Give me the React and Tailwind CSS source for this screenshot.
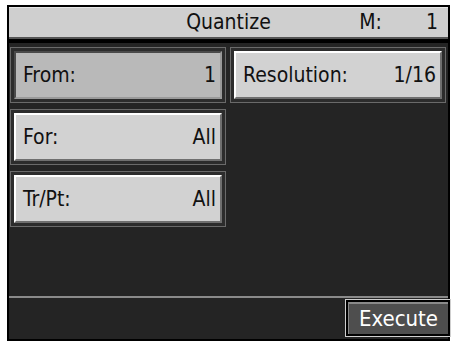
import React from 'react';

const font = { fontFamily: '"DejaVu Sans", "Liberation Sans", sans-serif' };

// One parameter field on the LCD
const Field = ({ label, value, active }) => (
  <div className="h-[56px] border border-[#6a6a6a] bg-[#2c2c2c] p-[3px]">
    <div
      className={
        active
          ? 'flex h-full items-center justify-between border-2 border-t-[#4a4a4a] border-l-[#4a4a4a] border-b-[#9a9a9a] border-r-[#9a9a9a] bg-[#b9b9b9] pl-[7px] pr-[4px]'
          : 'flex h-full items-center justify-between border-2 border-t-white border-l-white border-b-[#6f6f6f] border-r-[#6f6f6f] bg-[#d2d2d2] pl-[7px] pr-[4px]'
      }
    >
      <span className="font-stretch-condensed text-[21px] leading-none text-[#111]">{label}</span>
      <span className="font-stretch-condensed text-[21px] leading-none text-[#111]">{value}</span>
    </div>
  </div>
);

export default function App() {
  return (
    <div className="h-[342px] w-[454px] bg-white pl-[7px] pt-[5px]" style={font}>
      <div className="flex h-[336px] w-[443px] flex-col border-2 border-black bg-[#242424]">
        {/* title bar */}
        <div className="relative flex h-[32px] items-center justify-center border-b-2 border-t border-[#555] border-t-[#e6e6e6] bg-[#cfcfcf]">
          <span className="font-stretch-condensed text-[21px] leading-none text-[#111]">Quantize</span>
          <div className="absolute right-[10px] top-0 flex h-full items-center gap-[44px]">
            <span className="font-stretch-condensed text-[21px] leading-none text-[#111]">M:</span>
            <span className="font-stretch-condensed text-[21px] leading-none text-[#111]">1</span>
          </div>
        </div>
        <div className="h-[4px] bg-black" />

        {/* fields */}
        <div className="flex h-[253px] gap-[4px] px-[1px] pt-[4px]">
          <div className="flex w-[216px] flex-col gap-[6px]">
            <Field label="From:" value="1" active />
            <Field label="For:" value="All" />
            <Field label="Tr/Pt:" value="All" />
          </div>
          <div className="flex w-[216px] flex-col">
            <Field label="Resolution:" value="1/16" />
          </div>
        </div>

        <div className="h-[2px] bg-[#8a8a8a]" />

        {/* bottom bar */}
        <div className="flex flex-1 items-start justify-end pt-[1px]">
          <div className="mr-[-3px] h-[38px] w-[106px] border border-[#cfcfcf] bg-black p-[2px]">
            <div className="flex h-full items-center justify-center border-t-2 border-l border-t-[#8a8a8a] border-l-[#8a8a8a] bg-[#4e4e4e]">
              <span className="font-stretch-condensed text-[22px] leading-none text-white">Execute</span>
            </div>
          </div>
        </div>
      </div>
    </div>
  );
}
